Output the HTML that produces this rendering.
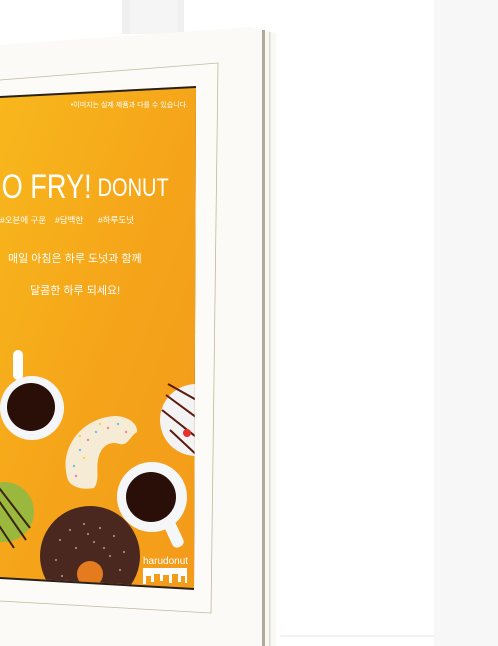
<!DOCTYPE html>
<html><head><meta charset="utf-8"><style>
html,body{margin:0;padding:0;width:498px;height:646px;overflow:hidden;background:#fff}
svg{display:block}
.t{font-family:"Liberation Sans","Noto Sans CJK KR",sans-serif;fill:#fff}
</style></head><body>
<svg width="498" height="646" viewBox="0 0 498 646" xmlns="http://www.w3.org/2000/svg">
<defs>
<linearGradient id="og" x1="0" y1="0" x2="1" y2="1">
<stop offset="0" stop-color="#f8b81c"/><stop offset="0.5" stop-color="#f5a51a"/><stop offset="1" stop-color="#f39a1a"/>
</linearGradient>
<clipPath id="pc"><polygon points="0,98 196,88 194,588 0,577"/></clipPath>
</defs>
<rect width="498" height="646" fill="#ffffff"/>
<rect x="434" y="0" width="64" height="646" fill="#f7f7f7"/>
<rect x="122" y="0" width="62" height="34" fill="#f0f0f0"/>
<rect x="130" y="0" width="48" height="34" fill="#f5f5f5"/>
<line x1="280" y1="636" x2="434" y2="636" stroke="#efeee8" stroke-width="1.5"/>
<!-- frame side depth -->
<polygon points="262,30 276,33 276,646 262,646" fill="#f9f8f3"/>
<rect x="262" y="30" width="3" height="616" fill="#b1a99a"/>
<rect x="269" y="32" width="1.5" height="614" fill="#dcd8ce"/>
<!-- frame face -->
<polygon points="0,45 250,27 262,30 262,646 0,646" fill="#fbfaf6"/>
<!-- mat -->
<polygon points="0,80 218,63 211,613 0,601" fill="#fcfbf7"/>
<polyline points="0,80 218,63 211,613 0,601" fill="none" stroke="#c2b898" stroke-width="0.8"/>
<!-- poster -->
<polygon points="0,96 196,86 194,590 0,579" fill="#2a2218"/>
<g clip-path="url(#pc)">
<rect x="0" y="80" width="200" height="520" fill="url(#og)"/>
<text class="t" x="188" y="107" font-size="7" text-anchor="end">•이미지는 실제 제품과 다를 수 있습니다.</text>
<text class="t" x="2" y="198" font-size="34" transform="scale(0.8,1)" fill="#f3f6fb">O FRY!</text>
<text class="t" x="122" y="196" font-size="25" transform="scale(0.8,1)" fill="#f3f6fb">DONUT</text>
<text class="t" x="0" y="223" font-size="8.5">#오븐에 구운</text>
<text class="t" x="55" y="223" font-size="8.5">#담백한</text>
<text class="t" x="98" y="223" font-size="8.5">#하루도넛</text>
<text class="t" x="8" y="262" font-size="11">매일 아침은 하루 도넛과 함께</text>
<text class="t" x="30" y="294" font-size="11">달콤한 하루 되세요!</text>
<!-- cup 1 -->
<rect x="13" y="350" width="10" height="30" rx="5" fill="#fff"/>
<circle cx="32" cy="408" r="32" fill="#f4f6f8"/>
<circle cx="31" cy="407" r="24" fill="#2a0e08"/>
<!-- green donut -->
<circle cx="4" cy="512" r="30" fill="#9bb83e"/>
<path d="M-10,488 L26,540 M-4,484 L30,528 M-18,500 L14,548" stroke="#3a2412" stroke-width="2" fill="none"/>
<!-- sprinkle donut -->
<path d="M68,480 C58,450 80,418 115,416 C128,416 138,424 137,432 C130,436 128,446 120,444 C108,440 100,448 98,460 C96,470 100,480 94,488 C84,490 72,488 68,480Z" fill="#f6ecd6"/>
<g fill="#6fc0e8"><circle cx="80" cy="450" r="1.2"/><circle cx="96" cy="432" r="1.2"/><circle cx="118" cy="424" r="1.2"/><circle cx="74" cy="466" r="1.2"/></g>
<g fill="#f07fa8"><circle cx="88" cy="440" r="1.2"/><circle cx="108" cy="428" r="1.2"/><circle cx="76" cy="476" r="1.2"/><circle cx="126" cy="432" r="1.2"/></g>
<g fill="#f2d640"><circle cx="84" cy="458" r="1.2"/><circle cx="100" cy="424" r="1.2"/><circle cx="80" cy="436" r="1.2"/></g>
<!-- white donut right -->
<circle cx="196" cy="420" r="36" fill="#f4f3f4"/>
<path d="M166,395 L200,420 M162,410 L200,440 M170,430 L200,458 M168,384 L200,402" stroke="#5a1a10" stroke-width="2" fill="none"/>
<circle cx="187" cy="433" r="4" fill="#e8302a"/>
<!-- cup 2 -->
<rect x="168" y="520" width="12" height="28" rx="5" fill="#f4f6f8" transform="rotate(-25 174 534)"/>
<circle cx="152" cy="497" r="35" fill="#f4f6f8"/>
<circle cx="151" cy="497" r="25" fill="#2a0e08"/>
<!-- chocolate donut -->
<circle cx="90" cy="556" r="50" fill="#4a2820"/>
<circle cx="90" cy="574" r="13" fill="#e47b1f"/>
<g fill="#efe7e4" opacity="0.8">
<circle cx="60" cy="540" r="0.9"/><circle cx="70" cy="530" r="0.9"/><circle cx="84" cy="524" r="0.9"/><circle cx="100" cy="528" r="0.9"/><circle cx="114" cy="536" r="0.9"/><circle cx="124" cy="552" r="0.9"/><circle cx="56" cy="560" r="0.9"/><circle cx="76" cy="548" r="0.9"/><circle cx="94" cy="542" r="0.9"/><circle cx="110" cy="556" r="0.9"/><circle cx="120" cy="570" r="0.9"/><circle cx="62" cy="576" r="0.9"/><circle cx="88" cy="534" r="0.9"/><circle cx="104" cy="548" r="0.9"/></g>
<!-- logo -->
<text class="t" x="143" y="564" font-size="10">harudonut</text>
<path d="M143,568 H187 V583 H185 V576 H181 V582 H178 V574 H172 V583 H169 V575 H163 V581 H160 V574 H154 V582 H151 V576 H146 V584 H143Z" fill="#fff"/>
</g>
</svg>
</body></html>
